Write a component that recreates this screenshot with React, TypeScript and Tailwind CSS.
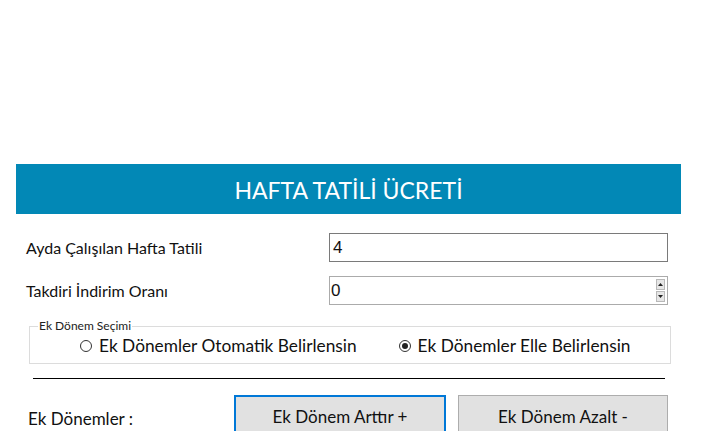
import React from 'react';

const App: React.FC = () => {
  return (
    <div className="w-[706px] h-[431px] overflow-hidden bg-white pt-[164px] font-['Lato',sans-serif] text-[#111]">
      {/* Header */}
      <div className="ml-[16px] w-[665px] h-[50px] bg-[#0288b6] flex items-center justify-center text-white text-[23px] pt-[2px]">
        HAFTA TATİLİ ÜCRETİ
      </div>

      {/* Ayda Çalışılan */}
      <div className="flex items-center mt-[19px]">
        <div className="w-[329px] pl-[26px] text-[16px]">Ayda Çalışılan Hafta Tatili</div>
        <div className="w-[339px] h-[29px] border border-[#7a7a7a] flex items-center pl-[3px] text-[17px] font-['Liberation_Sans',sans-serif]">
          4
        </div>
      </div>

      {/* Takdiri */}
      <div className="flex items-center mt-[14px]">
        <div className="w-[329px] pl-[26px] text-[16px]">Takdiri İndirim Oranı</div>
        <div className="w-[339px] h-[29px] border border-[#ababab] flex items-center pl-[1px] pr-[2px] text-[17px] font-['Liberation_Sans',sans-serif]">
          <span className="flex-1">0</span>
          <div className="flex flex-col w-[9px] h-[23px] gap-[1px]">
            <div className="flex-1 bg-[#e6e6e6] border border-[#b8b8b8] flex items-center justify-center">
              <svg width="5" height="3" viewBox="0 0 5 3"><path d="M2.5 0 L5 3 L0 3 Z" fill="#222" /></svg>
            </div>
            <div className="flex-1 bg-[#e6e6e6] border border-[#b8b8b8] flex items-center justify-center">
              <svg width="5" height="3" viewBox="0 0 5 3"><path d="M0 0 L5 0 L2.5 3 Z" fill="#222" /></svg>
            </div>
          </div>
        </div>
      </div>

      {/* Ek Dönem Seçimi */}
      <fieldset className="ml-[29px] w-[642px] mt-[14px] border border-[#dcdcdc] px-[8px] pb-[7px]">
        <legend className="text-[12px] leading-[14px] px-[1px] text-[#222]">Ek Dönem Seçimi</legend>
        <div className="flex items-center text-[17.3px] leading-[20px] mt-[3px]">
          <div className="flex items-center ml-[42px]">
            <span className="w-[12px] h-[12px] rounded-full border border-[#333] mr-[7px]" />
            <span>Ek Dönemler Otomatik Belirlensin</span>
          </div>
          <div className="flex items-center ml-[42px]">
            <span className="w-[12px] h-[12px] rounded-full border border-[#333] mr-[7px] flex items-center justify-center">
              <span className="w-[6px] h-[6px] rounded-full bg-[#222]" />
            </span>
            <span>Ek Dönemler Elle Belirlensin</span>
          </div>
        </div>
      </fieldset>

      <div className="ml-[33px] w-[632px] h-px bg-black mt-[14px]" />

      {/* Ek Dönemler */}
      <div className="flex items-start mt-[16px]">
        <div className="w-[234px] pl-[28px] pt-[11px] text-[17px]">Ek Dönemler :</div>
        <button className="w-[212px] h-[40px] bg-[#e1e1e1] border-2 border-[#0078d7] text-[17px] pt-[3px]">
          Ek Dönem Arttır +
        </button>
        <button className="ml-[12px] w-[210px] h-[40px] bg-[#e1e1e1] border border-[#adadad] text-[17px] pt-[3px]">
          Ek Dönem Azalt -
        </button>
      </div>
    </div>
  );
};

export default App;
